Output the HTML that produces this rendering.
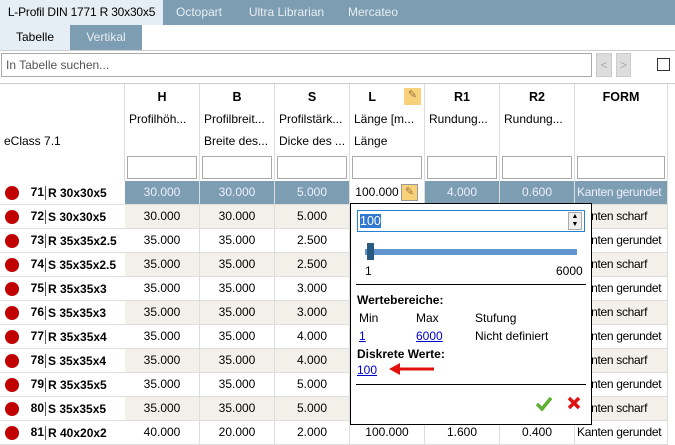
<!DOCTYPE html><html><head><style>
*{box-sizing:border-box;margin:0;padding:0}
body{width:675px;height:436px;overflow:hidden;background:#fff;font-family:"Liberation Sans",sans-serif;font-size:12px;color:#000;position:relative}
.a{position:absolute}
.tab{position:absolute;height:25px;line-height:25px;text-align:center;color:#e8eef3;font-size:12px;white-space:nowrap}
.hc{position:absolute;top:84px;height:97px;border-right:1px solid #ddd}
.hc b{position:absolute;top:6px;width:100%;text-align:center;font-size:12.5px}
.hc span{position:absolute;left:4px;font-size:12px}
.hc i{position:absolute;left:2px;right:2px;top:72px;height:23px;border:1px solid #aaa;background:#fff}
.row{position:absolute;left:0;width:668px;height:24px;border-bottom:1px solid #ddd}
.row div{position:absolute;top:0;height:23px;line-height:23px;border-right:1px solid #ddd;text-align:center;white-space:nowrap;overflow:hidden}
.dot{position:absolute;left:5px;top:5px;width:14px;height:14px;border-radius:50%;background:#c00000}
.num{position:absolute;left:26px;width:18px;text-align:right;font-weight:bold;line-height:23px}
.nm{position:absolute;left:45px;border-left:1px solid #555;padding-left:2px;font-weight:bold;line-height:14px;top:5px;height:14px}
a{color:#00c;text-decoration:underline}
</style></head><body>
<div class="a" style="left:0;top:0;width:675px;height:25px;background:#7c9db2"></div>
<div class="tab" style="left:0;width:163px;background:#e6eef5;color:#000;letter-spacing:-0.2px">L-Profil DIN 1771 R 30x30x5</div>
<div class="tab" style="left:163px;width:72px">Octopart</div>
<div class="tab" style="left:235px;width:103px">Ultra Librarian</div>
<div class="tab" style="left:338px;width:70px">Mercateo</div>
<div class="tab" style="left:0;top:25px;width:70px;background:#e6eef5;color:#000">Tabelle</div>
<div class="tab" style="left:70px;top:25px;width:72px;background:#7c9db2">Vertikal</div>
<div class="a" style="left:0;top:50px;width:675px;height:1px;background:#ccc"></div>
<div class="a" style="left:1px;top:53px;width:591px;height:24px;border:1px solid #aaa;padding-left:4px;line-height:22px;color:#555">In Tabelle suchen...</div>
<div class="a" style="left:596px;top:53px;width:16px;height:24px;background:#ddd;border:1px solid #ccc;color:#aaa;text-align:center;line-height:22px">&lt;</div>
<div class="a" style="left:616px;top:53px;width:15px;height:24px;background:#ddd;border:1px solid #ccc;color:#aaa;text-align:center;line-height:22px">&gt;</div>
<div class="a" style="left:657px;top:58px;width:13px;height:13px;border:1px solid #333"></div>
<div class="a" style="left:0;top:83px;width:675px;height:1px;background:#ccc"></div>
<div class="hc" style="left:0;width:125px"><span style="top:50px">eClass 7.1</span></div>
<div class="hc" style="left:125px;width:75px"><b>H</b><span style="top:28px">Profilhöh...</span><i></i></div>
<div class="hc" style="left:200px;width:75px"><b>B</b><span style="top:28px">Profilbreit...</span><span style="top:50px">Breite des...</span><i></i></div>
<div class="hc" style="left:275px;width:75px"><b>S</b><span style="top:28px">Profilstärk...</span><span style="top:50px">Dicke des ...</span><i></i></div>
<div class="hc" style="left:350px;width:75px"><b style="width:60%">L</b><div class="a" style="left:54px;top:4px;width:17px;height:17px;background:#f8d27a;color:#a07040;text-align:center;font-size:11px">✎</div><span style="top:28px">Länge [m...</span><span style="top:50px">Länge</span><i></i></div>
<div class="hc" style="left:425px;width:75px"><b>R1</b><span style="top:28px">Rundung...</span><i></i></div>
<div class="hc" style="left:500px;width:75px"><b>R2</b><span style="top:28px">Rundung...</span><i></i></div>
<div class="hc" style="left:575px;width:93px"><b>FORM</b><i></i></div>
<div id="rows"></div>
<script>
var d=[["71","R 30x30x5","30.000","30.000","5.000","100.000","4.000","0.600","Kanten gerundet"],
["72","S 30x30x5","30.000","30.000","5.000","","","","Kanten scharf"],
["73","R 35x35x2.5","35.000","35.000","2.500","","","","Kanten gerundet"],
["74","S 35x35x2.5","35.000","35.000","2.500","","","","Kanten scharf"],
["75","R 35x35x3","35.000","35.000","3.000","","","","Kanten gerundet"],
["76","S 35x35x3","35.000","35.000","3.000","","","","Kanten scharf"],
["77","R 35x35x4","35.000","35.000","4.000","","","","Kanten gerundet"],
["78","S 35x35x4","35.000","35.000","4.000","","","","Kanten scharf"],
["79","R 35x35x5","35.000","35.000","5.000","","","","Kanten gerundet"],
["80","S 35x35x5","35.000","35.000","5.000","","","","Kanten scharf"],
["81","R 40x20x2","40.000","20.000","2.000","100.000","1.600","0.400","Kanten gerundet"]];
var h="",xs=[125,200,275,350,425,500,575];
d.forEach(function(r,i){var y=181+i*24,sel=i==0,alt=i%2==1;
var bg=sel?"#7c9db2":(alt?"#f2f0e8":"#fff"),fc=sel?"#eef":"#000";
h+='<div class="row" style="top:'+y+'px"><div style="left:0;width:125px;background:#fff;border:0"></div><span class="dot"></span><span class="num">'+r[0]+'</span><span class="nm">'+r[1]+'</span>';
for(var k=0;k<7;k++){var w=k==6?93:75,b=bg,c=fc,al="center",t=r[2+k];
if(sel&&k==3){b="#fff";c="#000";t='<span style="margin-right:20px">100.000</span><span style="position:absolute;left:51px;top:3px;width:17px;height:17px;background:#f8d27a;border:1px solid #999;line-height:15px;font-size:11px;color:#a07040">✎</span>';}
if(k==6){al="left;padding-left:2px;letter-spacing:-0.3px"}
h+='<div style="left:'+xs[k]+'px;width:'+w+'px;background:'+b+';color:'+c+';text-align:'+al+'">'+t+'</div>';}
h+='</div>';});
document.getElementById("rows").innerHTML=h;
</script>
<div class="a" style="left:350px;top:203px;width:242px;height:222px;background:#fff;border:1px solid #000">
<div class="a" style="left:6px;top:6px;width:228px;height:22px;border:1px solid #2a7fd0"><span class="a" style="left:2px;top:3px;background:#3178d0;color:#fff;line-height:14px;font-size:12.5px">100</span>
<div class="a" style="right:2px;top:1px;width:14px;height:18px;border:1px solid #aaa;background:#eee;font-size:7px;text-align:center;line-height:8px">▲<br>▼</div></div>
<div class="a" style="left:14px;top:45px;width:212px;height:6px;background:#6095cf"></div>
<div class="a" style="left:16px;top:39px;width:7px;height:17px;background:#2a5a80"></div>
<div class="a" style="left:14px;top:60px">1</div><div class="a" style="left:205px;top:60px">6000</div>
<div class="a" style="left:5px;top:80px;width:230px;height:1px;background:#000"></div>
<div class="a" style="left:6px;top:89px;font-weight:bold">Wertebereiche:</div>
<div class="a" style="left:8px;top:107px">Min</div><div class="a" style="left:65px;top:107px">Max</div><div class="a" style="left:124px;top:107px">Stufung</div>
<div class="a" style="left:8px;top:125px"><a>1</a></div><div class="a" style="left:65px;top:125px"><a>6000</a></div><div class="a" style="left:124px;top:125px">Nicht definiert</div>
<div class="a" style="left:6px;top:143px;font-weight:bold">Diskrete Werte:</div>
<div class="a" style="left:6px;top:159px"><a>100</a></div>
<svg class="a" style="left:38px;top:159px" width="46" height="12"><path d="M8 6H45" stroke="#e01010" stroke-width="3"/><path d="M0 6L11 0V12Z" fill="#e01010"/></svg>
<div class="a" style="left:5px;top:180px;width:230px;height:1px;background:#000"></div>
<svg class="a" style="left:184px;top:192px" width="18" height="16"><path d="M2 8L7 13L16 2" stroke="#5cb030" stroke-width="3.5" fill="none"/></svg>
<svg class="a" style="left:216px;top:192px" width="14" height="14"><path d="M2 2L12 12M12 2L2 12" stroke="#e01010" stroke-width="3.5"/></svg>
</div>
</body></html>
